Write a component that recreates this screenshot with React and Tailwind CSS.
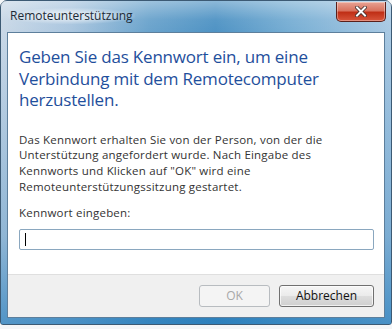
export default function App() {
  const font = { fontFamily: '"Open Sans", "Noto Sans", Arial, sans-serif' };
  return (
    <div className="w-[392px] h-[329px] bg-[#f4f6f8] overflow-hidden" style={font}>
      <div className="w-[392px] h-[325px] rounded-t-[7px] rounded-b-[3px] border border-[#3c5a74] flex flex-col bg-[linear-gradient(90deg,#c9d8e7_0%,#aac6df_18%,#6aa3cc_38%,#4f93c4_55%,#79afd4_75%,#a9c9e3_100%)]">
        <div className="h-[31px] flex items-start justify-between pl-[7px] pr-[5px] bg-[linear-gradient(180deg,rgba(255,255,255,0.35)_0%,rgba(255,255,255,0.05)_60%,rgba(255,255,255,0)_100%)]">
          <div className="mt-[7px] text-[12px] leading-[16px] text-[#1d2a36] px-[2px] rounded-[6px] bg-[radial-gradient(ellipse_at_center,rgba(255,255,255,0.55)_30%,rgba(255,255,255,0)_75%)]">
            Remoteunterstützung
          </div>
          <div className="mt-[1px] w-[50px] h-[20px] rounded-b-[5px] border border-[#5a1f1a] border-t-0 flex items-center justify-center bg-[linear-gradient(180deg,#e8a394_0%,#d9735f_45%,#c02f16_55%,#d8563c_100%)] shadow-[inset_0_0_0_1px_rgba(255,255,255,0.35)]">
            <svg width="12" height="11" viewBox="0 0 12 11">
              <path d="M2 1.5 L10 9.5 M10 1.5 L2 9.5" stroke="#3a2a28" strokeWidth="3.6" strokeLinecap="square" />
              <path d="M2 1.5 L10 9.5 M10 1.5 L2 9.5" stroke="#ffffff" strokeWidth="2" strokeLinecap="square" />
            </svg>
          </div>
        </div>
        <div className="flex-1 px-[6px] pb-[6px] bg-[linear-gradient(180deg,rgba(255,255,255,0)_0%,rgba(40,120,180,0.35)_70%,rgba(30,120,185,0.7)_100%)]">
          <div className="h-full border border-[#5d7f9c] flex flex-col bg-white">
            <div className="flex-1 bg-white pl-[11px] pr-[10px] pt-[13px]">
              <div className="text-[17px] leading-[21.5px] text-[#1f4f9c] tracking-[-0.2px] whitespace-nowrap">
                Geben Sie das Kennwort ein, um eine<br />Verbindung mit dem Remotecomputer<br />herzustellen.
              </div>
              <div className="mt-[21px] text-[11.5px] leading-[15.7px] text-[#333333] tracking-[0.2px] whitespace-nowrap">
                Das Kennwort erhalten Sie von der Person, von der die<br />Unterstützung angefordert wurde. Nach Eingabe des<br />Kennworts und Klicken auf "OK" wird eine<br />Remoteunterstützungssitzung gestartet.
              </div>
              <div className="mt-[11px] text-[11.5px] leading-[15.7px] text-[#333333] tracking-[0.2px]">
                Kennwort eingeben:
              </div>
              <div className="mt-[8px] h-[21px] border border-[#8aa7bf] rounded-[2px] flex items-center pl-[5px]">
                <div className="w-[1px] h-[13px] bg-black" />
              </div>
            </div>
            <div className="h-[43px] border-t border-[#dfdfdf] bg-[#f0f0f0] flex items-start justify-end gap-[9px] pr-[10px] pt-[10px]">
              <div className="w-[71px] h-[22px] rounded-[3px] border border-[#b8bcc0] bg-[#f4f4f4] flex items-center justify-center text-[12px] text-[#a8a8a8]">
                OK
              </div>
              <div className="w-[95px] h-[22px] rounded-[3px] border border-[#707070] bg-[linear-gradient(180deg,#f6f6f6_0%,#ebebeb_48%,#dddddd_52%,#cfcfcf_100%)] shadow-[inset_0_0_0_1px_rgba(255,255,255,0.7)] flex items-center justify-center text-[12px] text-[#111]">
                Abbrechen
              </div>
            </div>
          </div>
        </div>
      </div>
    </div>
  );
}
